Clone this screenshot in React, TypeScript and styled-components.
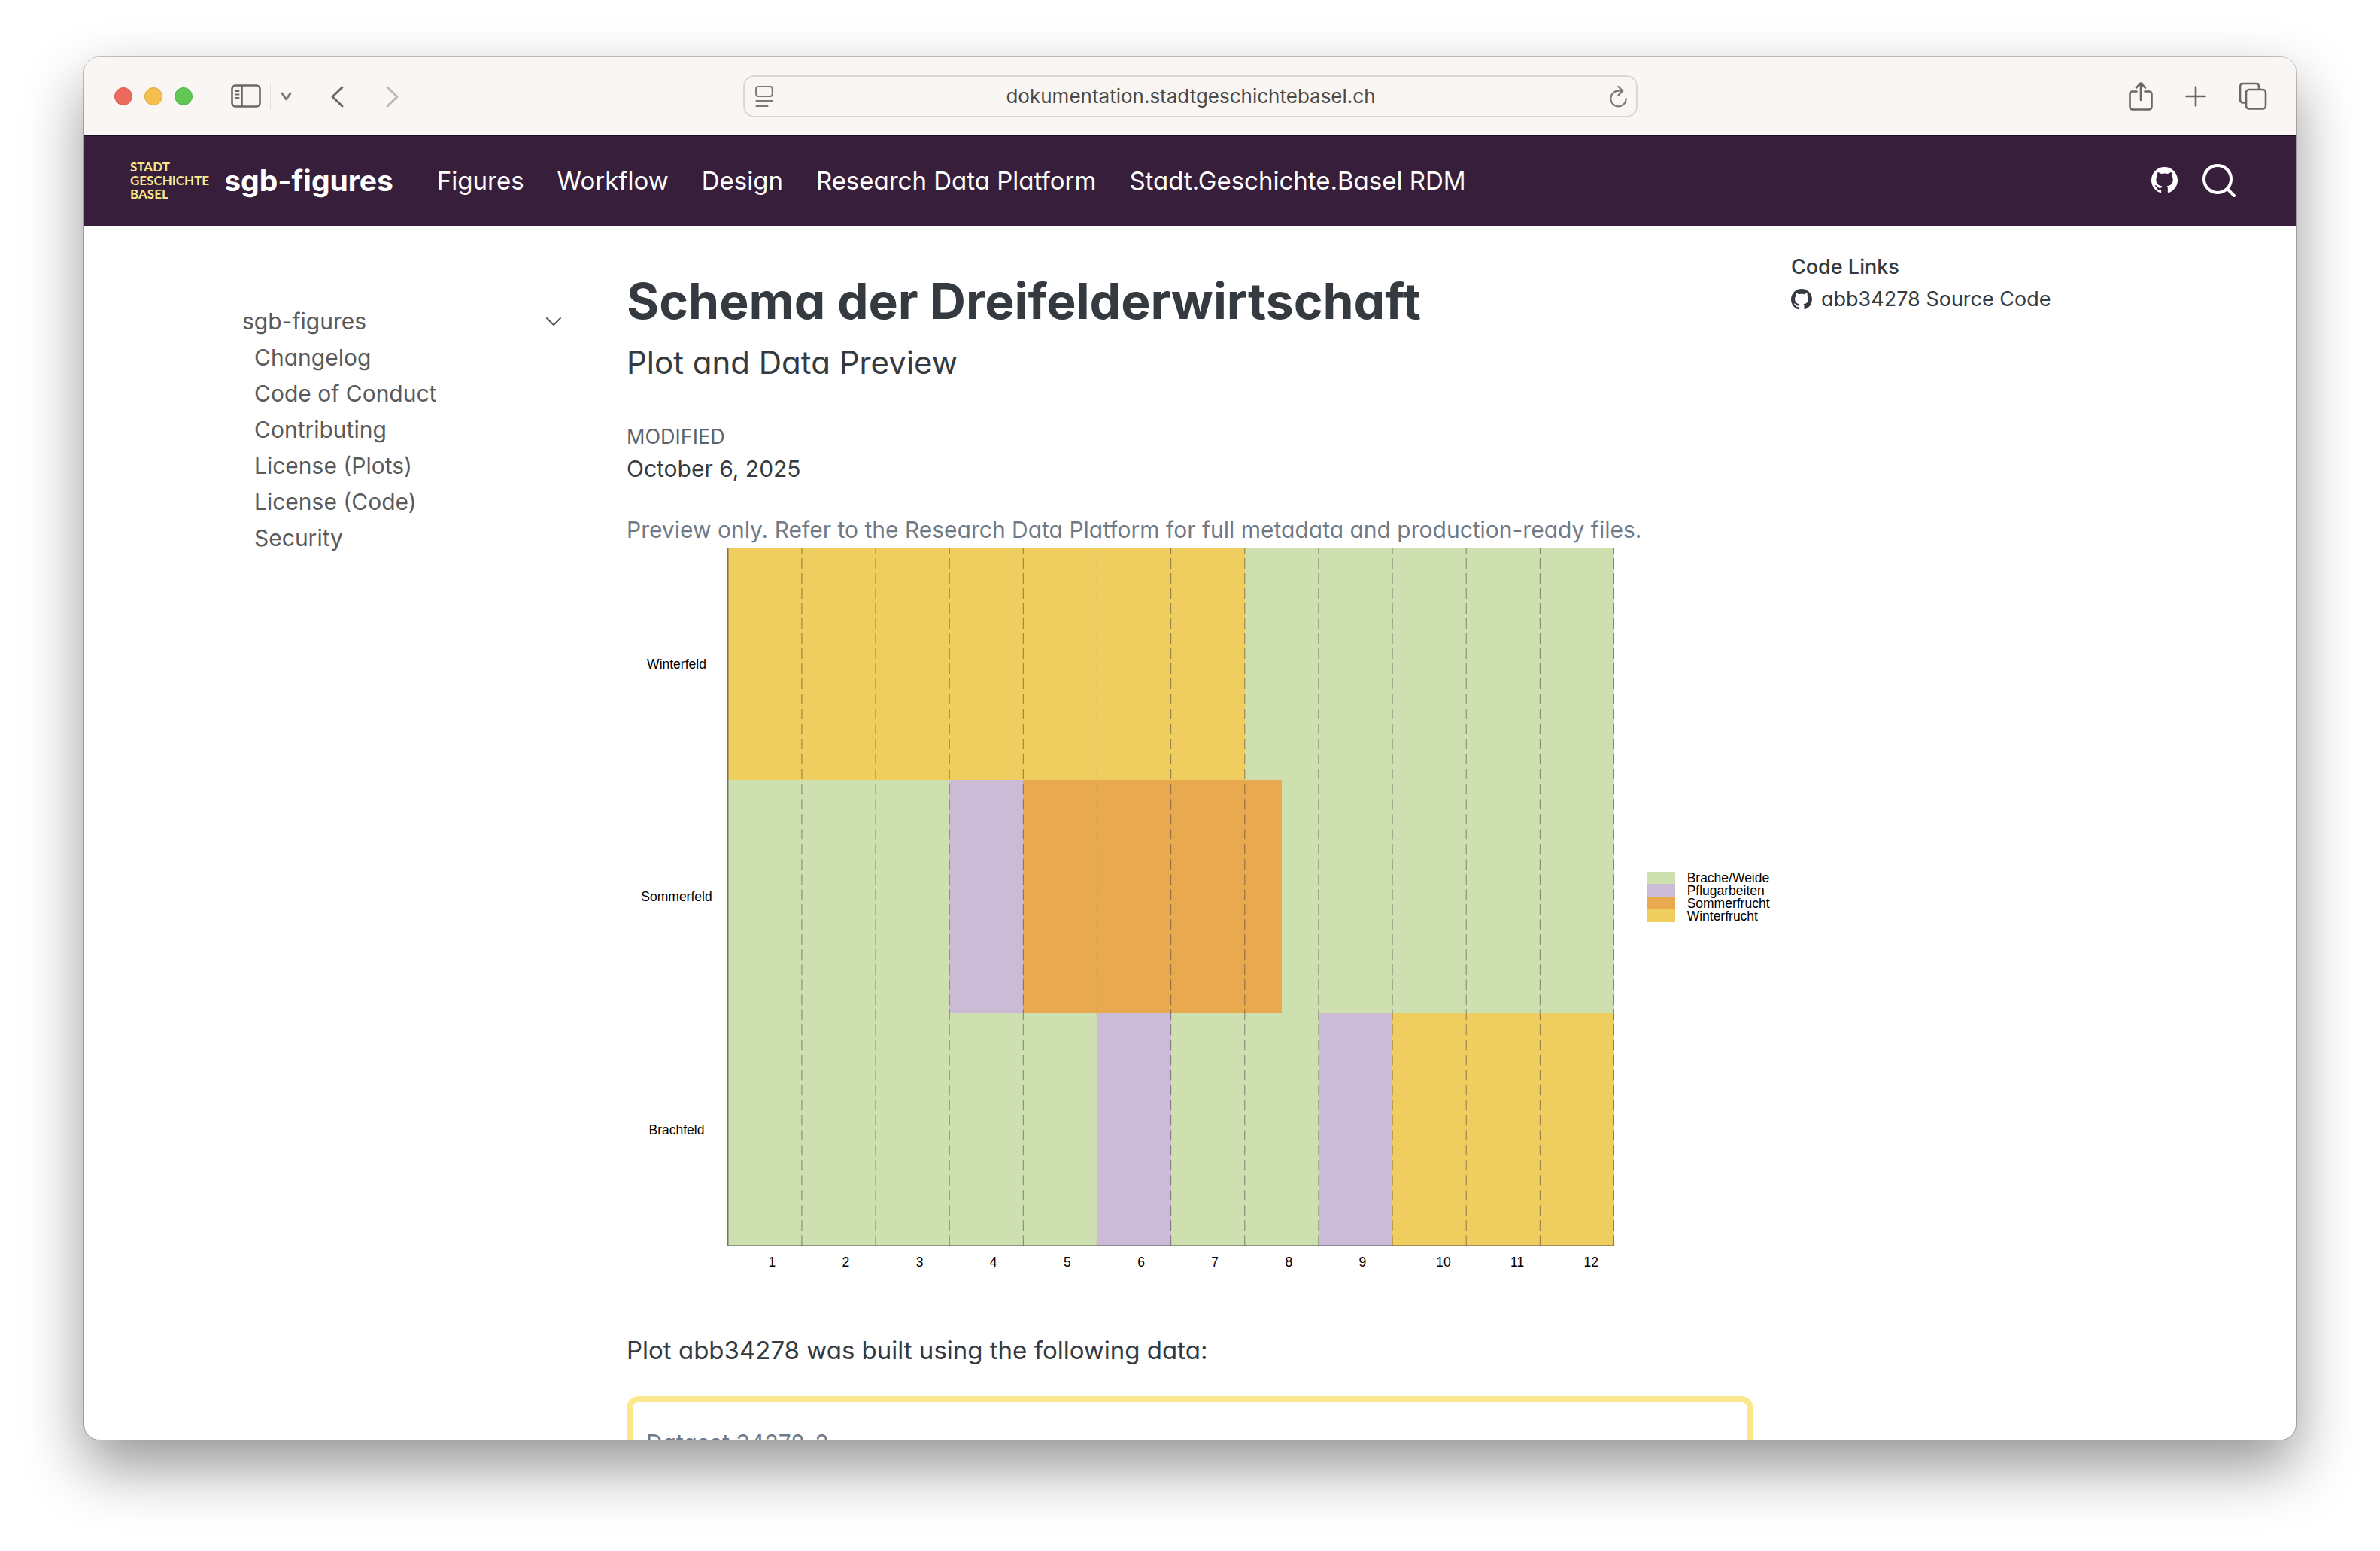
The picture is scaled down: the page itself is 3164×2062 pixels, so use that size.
import React from "react";
import styled, { createGlobalStyle } from "styled-components";
import { BsGithub } from "react-icons/bs";

const GlobalStyle = createGlobalStyle`
  *, *::before, *::after { box-sizing: border-box; }
  body {
    margin: 0;
    background: #fff;
    color: #343a40;
    font-family: Inter, "Liberation Sans", sans-serif;
    font-feature-settings: "cv11";
  }
  h1, h2, p, ul, dl, dd { margin: 0; padding: 0; }
  ul { list-style: none; }
  a { color: inherit; text-decoration: none; }
  button { padding: 0; border: 0; background: none; color: inherit; font: inherit; cursor: pointer; }
  svg { display: block; flex: none; }
`;

const Desktop = styled.div`
  height: 100vh;
  padding: 76px 112px 148px;
`;

const Window = styled.div`
  display: flex;
  flex-direction: column;
  height: 100%;
  overflow: hidden;
  border-radius: 20px;
  background: #fff;
  box-shadow: 0 0 0 1px rgba(0, 0, 0, 0.22), 0 36px 80px rgba(0, 0, 0, 0.42);
`;

/* Browser toolbar */

const Toolbar = styled.div`
  display: grid;
  grid-template-columns: 1fr minmax(0, 1189px) 1fr;
  align-items: center;
  flex: none;
  height: 104px;
  padding: 0 38px;
  background: #faf6f3;
  color: #6d6762;
`;

const ToolGroup = styled.div<{ $end?: boolean }>`
  display: flex;
  align-items: center;
  justify-content: ${(p) => (p.$end ? "flex-end" : "flex-start")};
  gap: ${(p) => (p.$end ? "43px" : "0")};
`;

const Lights = styled.div`
  display: flex;
  gap: 16px;
  margin: 0 51px 0 2px;
`;

const Light = styled.button<{ $color: string; $ring: string }>`
  width: 24px;
  height: 24px;
  border: 1px solid ${(p) => p.$ring};
  border-radius: 50%;
  background: ${(p) => p.$color};
`;

const SidebarToggle = styled.div`
  display: flex;
  align-items: center;
  gap: 12px;
  margin-right: 50px;
`;

const Divider = styled.span`
  width: 1px;
  height: 36px;
  background: #e4e0dd;
`;

const History = styled.div`
  display: flex;
  gap: 54px;
`;

const Address = styled.label`
  display: flex;
  align-items: center;
  height: 56px;
  padding: 0 10px 0 14px;
  border: 2px solid #dad7d4;
  border-radius: 15px;
`;

const AddressInput = styled.input`
  flex: 1;
  min-width: 0;
  border: 0;
  outline: 0;
  background: none;
  color: #4c4a48;
  font: 400 26px/32px Inter, "Liberation Sans", sans-serif;
  text-align: center;
`;

/* Site header */

const SiteHeader = styled.header`
  display: flex;
  align-items: center;
  flex: none;
  height: 120px;
  padding: 0 79px 2px 61px;
  border-top: 1px solid #1c0a22;
  background: #371f3b;
  color: #fff;
`;

const Logo = styled.span`
  display: flex;
  flex-direction: column;
  margin-right: 20px;
  color: #fbe78c;
  font: 700 17px/18px Lato, sans-serif;
`;

const Brand = styled.a`
  margin-right: 58px;
  font-size: 39px;
  font-weight: 700;
  line-height: 48px;
`;

const Menu = styled.nav`
  display: flex;
  flex: 1;
  gap: 44px;
  font-size: 33px;
  line-height: 48px;
  white-space: nowrap;
`;

const HeaderTools = styled.div`
  display: flex;
  align-items: center;
  gap: 32px;
`;

/* Page */

const Page = styled.div`
  display: grid;
  grid-template-columns: 461fr 1498fr 461fr;
  gap: 50px;
  flex: 1;
  min-height: 0;
  padding: 0 210px;
`;

const Sidebar = styled.nav`
  padding: 103px 36px 0 0;
  color: #5a5a5a;
  font-size: 30px;
  line-height: 48px;
`;

const SidebarHead = styled.div`
  display: flex;
  align-items: center;
  justify-content: space-between;
`;

const SidebarItems = styled.ul`
  padding-left: 16px;
`;

const Main = styled.main`
  min-width: 0;
  padding-top: 56px;
`;

const Title = styled.h1`
  font-size: 66px;
  font-weight: 700;
  line-height: 88px;
`;

const Subtitle = styled.p`
  font-size: 42px;
  line-height: 76px;
`;

const Meta = styled.dl`
  padding: 40px 0 36px;
  font-size: 30px;
  line-height: 42px;
  color: #343a40;
`;

const MetaLabel = styled.dt`
  color: #5f656b;
  font-size: 27px;
  text-transform: uppercase;
`;

const Note = styled.p`
  color: #6f7a86;
  font-size: 30px;
  line-height: 48px;
`;

const Chart = styled.svg`
  width: 100%;
  overflow: visible;
  font-family: "Liberation Sans", Arial, sans-serif;
  font-size: 10px;
  font-feature-settings: normal;
`;

const Lead = styled.p`
  padding: 64px 0 35px;
  font-size: 33px;
  line-height: 52px;
`;

const Dataset = styled.section`
  padding: 30px 18px;
  border: 8px solid #fbe88c;
  border-radius: 16px;
  color: #6f7a86;
  font-size: 30px;
  line-height: 48px;
`;

const Aside = styled.aside`
  padding-top: 33px;
  font-size: 27px;
  line-height: 43px;
`;

const AsideTitle = styled.h2`
  font-size: 27px;
  font-weight: 500;
  line-height: 43px;
`;

const AsideLink = styled.a`
  display: flex;
  align-items: center;
  gap: 12px;
`;

const SidebarIcon = () => (
  <svg width="40" height="32" viewBox="0 0 40 32" fill="none" stroke="currentColor" strokeWidth="2.6">
    <rect x="1.5" y="1.5" width="37" height="28" rx="4.5" />
    <path d="M14.5 2v27" />
    <path d="M6 9h4.5M6 13.5h4.5M6 18h4.5" strokeWidth="2" strokeLinecap="round" />
  </svg>
);

const Chevron = ({ w, h, s, dir, color }: { w: number; h: number; s: number; dir: "down" | "left" | "right"; color?: string }) => {
  const d = {
    down: `M${s} ${s}L${w / 2} ${h - s}L${w - s} ${s}`,
    left: `M${w - s} ${s}L${s} ${h / 2}L${w - s} ${h - s}`,
    right: `M${s} ${s}L${w - s} ${h / 2}L${s} ${h - s}`,
  }[dir];
  return (
    <svg width={w} height={h} fill="none" stroke={color ?? "currentColor"} strokeWidth={s} strokeLinecap="round" strokeLinejoin="round">
      <path d={d} />
    </svg>
  );
};

const ReaderIcon = () => (
  <svg width="24" height="30" viewBox="0 0 24 30" fill="none" stroke="#7c7875" strokeWidth="2.2" strokeLinecap="round">
    <rect x="1.2" y="2" width="21.6" height="13" rx="3" />
    <path d="M1.5 21h21M1.5 28h15" />
  </svg>
);

const ReloadIcon = () => (
  <svg width="26" height="30" viewBox="0 0 26 30" fill="none" stroke="#7c7875" strokeWidth="2.2" strokeLinecap="round" strokeLinejoin="round">
    <path d="M18 7.7H12.5A10.3 10.3 0 1 0 22.8 18" />
    <path d="M12.5 2l5.8 5.7-5.8 5.7" />
  </svg>
);

const ShareIcon = () => (
  <svg width="32" height="40" viewBox="0 0 32 40" fill="none" stroke="currentColor" strokeWidth="2.6" strokeLinecap="round" strokeLinejoin="round">
    <path d="M10.5 13.5H5a3.5 3.5 0 0 0-3.5 3.5V34A3.5 3.5 0 0 0 5 37.5h22a3.5 3.5 0 0 0 3.5-3.5V17a3.5 3.5 0 0 0-3.5-3.5h-5.5" />
    <path d="M16 25V2.5M10 8.5l6-6 6 6" />
  </svg>
);

const PlusIcon = () => (
  <svg width="28" height="28" fill="none" stroke="currentColor" strokeWidth="2.6" strokeLinecap="round">
    <path d="M14 1.5v25M1.5 14h25" />
  </svg>
);

const TabsIcon = () => (
  <svg width="38" height="38" viewBox="0 0 38 38" fill="none" stroke="currentColor" strokeWidth="2.6" strokeLinejoin="round">
    <path d="M10 27.5H6A4 4 0 0 1 2 23.5V6a4 4 0 0 1 4-4h17a4 4 0 0 1 4 4v3.5" />
    <rect x="10" y="10" width="26" height="25.5" rx="4" />
  </svg>
);

const SearchIcon = () => (
  <svg width="46" height="46" viewBox="0 0 46 46" fill="none" stroke="currentColor" strokeWidth="4" strokeLinecap="round">
    <circle cx="21" cy="21" r="18" />
    <path d="M34 34l9 9" />
  </svg>
);

/* Three-field rotation plot */

const COLORS = {
  fallow: "#cedfb0",
  plough: "#ccbbd6",
  summer: "#e8a94f",
  winter: "#efcd5f",
};
type Crop = keyof typeof COLORS;

const FIELDS: { name: string; spans: [Crop, number, number][] }[] = [
  { name: "Winterfeld", spans: [["winter", 0, 7], ["fallow", 7, 12]] },
  { name: "Sommerfeld", spans: [["fallow", 0, 3], ["plough", 3, 4], ["summer", 4, 7.5], ["fallow", 7.5, 12]] },
  { name: "Brachfeld", spans: [["fallow", 0, 5], ["plough", 5, 6], ["fallow", 6, 8], ["plough", 8, 9], ["winter", 9, 12]] },
];

const LEGEND: [Crop, string][] = [
  ["fallow", "Brache/Weide"],
  ["plough", "Pflugarbeiten"],
  ["summer", "Sommerfrucht"],
  ["winter", "Winterfrucht"],
];

const PLOT = { left: 77, width: 673, row: 176.8 };
const MONTH = PLOT.width / 12;
const BOTTOM = PLOT.row * 3;
const MONTHS = Array.from({ length: 12 }, (_, i) => i + 1);

const FieldChart = () => (
  <Chart viewBox="0 0 856 558" role="img" aria-label="Schema der Dreifelderwirtschaft">
    {FIELDS.map((field, r) => (
      <g key={field.name}>
        {field.spans.map(([crop, from, to]) => (
          <rect
            key={from}
            x={PLOT.left + from * MONTH}
            y={r * PLOT.row}
            width={(to - from) * MONTH}
            height={PLOT.row}
            fill={COLORS[crop]}
            shapeRendering="crispEdges"
          />
        ))}
        <text x="38" y={r * PLOT.row + 92} textAnchor="middle">{field.name}</text>
      </g>
    ))}
    {MONTHS.map((m) => (
      <g key={m}>
        <line
          x1={PLOT.left + m * MONTH}
          x2={PLOT.left + m * MONTH}
          y1={BOTTOM}
          y2="0"
          stroke="#333"
          strokeOpacity="0.5"
          strokeWidth="0.6"
          strokeDasharray="8 3.43"
        />
        <text x={PLOT.left + (m - 0.5) * MONTH + String(m).length * 5.4} y="546" textAnchor="middle">{m}</text>
      </g>
    ))}
    <path d={`M${PLOT.left} 0V${BOTTOM}H${PLOT.left + PLOT.width}`} fill="none" stroke="#333" strokeOpacity="0.8" strokeWidth="0.7" />
    {LEGEND.map(([crop, label], i) => (
      <g key={crop}>
        <rect x="775.5" y={246 + i * 9.7} width="21" height="9.7" fill={COLORS[crop]} shapeRendering="crispEdges" />
        <text x="805.5" y={254.5 + i * 9.7}>{label}</text>
      </g>
    ))}
  </Chart>
);

const MENU = ["Figures", "Workflow", "Design", "Research Data Platform", "Stadt.Geschichte.Basel RDM"];
const PAGES = ["Changelog", "Code of Conduct", "Contributing", "License (Plots)", "License (Code)", "Security"];

export default function App() {
  return (
    <>
      <GlobalStyle />
      <Desktop>
        <Window>
          <Toolbar>
            <ToolGroup>
              <Lights>
                <Light $color="#ed6a5f" $ring="#d9574c" aria-label="Close" />
                <Light $color="#f5bf4f" $ring="#dba63a" aria-label="Minimize" />
                <Light $color="#62c655" $ring="#4fae42" aria-label="Zoom" />
              </Lights>
              <SidebarToggle>
                <button aria-label="Show sidebar"><SidebarIcon /></button>
                <Divider />
                <button aria-label="Tab groups"><Chevron w={17} h={14} s={3} dir="down" color="#7c7875" /></button>
              </SidebarToggle>
              <History>
                <button aria-label="Back"><Chevron w={19} h={31} s={3} dir="left" /></button>
                <button aria-label="Forward"><Chevron w={19} h={31} s={3} dir="right" color="#bcb8b5" /></button>
              </History>
            </ToolGroup>
            <Address>
              <ReaderIcon />
              <AddressInput aria-label="Address" defaultValue="dokumentation.stadtgeschichtebasel.ch" />
              <button aria-label="Reload"><ReloadIcon /></button>
            </Address>
            <ToolGroup $end>
              <button aria-label="Share"><ShareIcon /></button>
              <button aria-label="New tab"><PlusIcon /></button>
              <button aria-label="Tab overview"><TabsIcon /></button>
            </ToolGroup>
          </Toolbar>

          <SiteHeader>
            <Logo>
              <span>STADT</span>
              <span>GESCHICHTE</span>
              <span>BASEL</span>
            </Logo>
            <Brand href="#">sgb-figures</Brand>
            <Menu>
              {MENU.map((m) => <a key={m} href="#">{m}</a>)}
            </Menu>
            <HeaderTools>
              <a href="#" aria-label="GitHub"><BsGithub size={35} /></a>
              <button aria-label="Search"><SearchIcon /></button>
            </HeaderTools>
          </SiteHeader>

          <Page>
            <Sidebar>
              <SidebarHead>
                <a href="#">sgb-figures</a>
                <button aria-label="Toggle section"><Chevron w={22} h={13} s={2} dir="down" /></button>
              </SidebarHead>
              <SidebarItems>
                {PAGES.map((p) => <li key={p}><a href="#">{p}</a></li>)}
              </SidebarItems>
            </Sidebar>

            <Main>
              <Title>Schema der Dreifelderwirtschaft</Title>
              <Subtitle>Plot and Data Preview</Subtitle>
              <Meta>
                <MetaLabel>Modified</MetaLabel>
                <dd>October 6, 2025</dd>
              </Meta>
              <Note>Preview only. Refer to the Research Data Platform for full metadata and production-ready files.</Note>
              <FieldChart />
              <Lead>Plot abb34278 was built using the following data:</Lead>
              <Dataset>Dataset 34278_2</Dataset>
            </Main>

            <Aside>
              <AsideTitle>Code Links</AsideTitle>
              <AsideLink href="#"><BsGithub size={28} />abb34278 Source Code</AsideLink>
            </Aside>
          </Page>
        </Window>
      </Desktop>
    </>
  );
}
